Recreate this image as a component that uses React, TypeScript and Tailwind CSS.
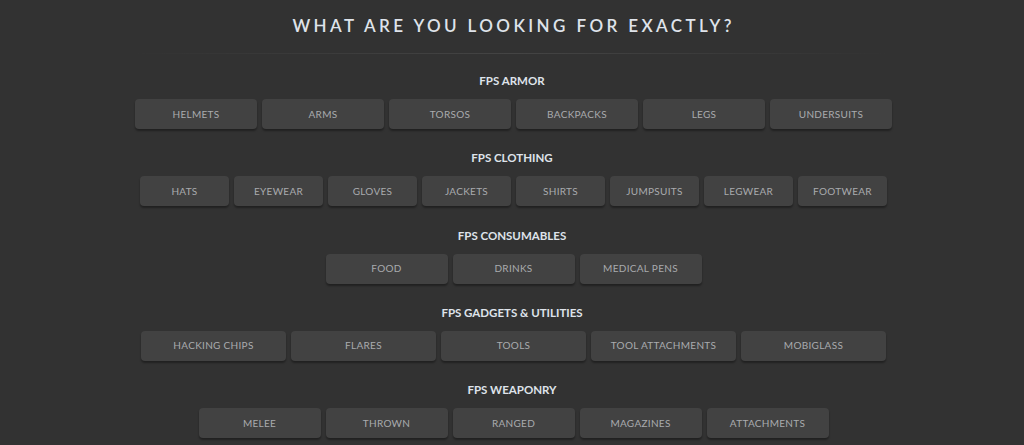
import React from "react";

interface Section {
  title: string;
  width: string;
  items: string[];
}

const sections: Section[] = [
  { title: "FPS ARMOR", width: "w-[122px]", items: ["HELMETS", "ARMS", "TORSOS", "BACKPACKS", "LEGS", "UNDERSUITS"] },
  { title: "FPS CLOTHING", width: "w-[89px]", items: ["HATS", "EYEWEAR", "GLOVES", "JACKETS", "SHIRTS", "JUMPSUITS", "LEGWEAR", "FOOTWEAR"] },
  { title: "FPS CONSUMABLES", width: "w-[122px]", items: ["FOOD", "DRINKS", "MEDICAL PENS"] },
  { title: "FPS GADGETS & UTILITIES", width: "w-[145px]", items: ["HACKING CHIPS", "FLARES", "TOOLS", "TOOL ATTACHMENTS", "MOBIGLASS"] },
  { title: "FPS WEAPONRY", width: "w-[122px]", items: ["MELEE", "THROWN", "RANGED", "MAGAZINES", "ATTACHMENTS"] },
];

export default function App() {
  return (
    <div className="min-h-screen w-full bg-[#323232] font-['Lato','Open_Sans',sans-serif] overflow-hidden">
      {/* heading */}
      <div className="pt-[14px] text-center">
        <h1 className="text-[17px] leading-[24px] font-semibold tracking-[0.2em] text-[#dfe3ea] pl-[0.2em]">
          WHAT ARE YOU LOOKING FOR EXACTLY?
        </h1>
      </div>
      <div className="mx-auto mt-[15px] h-px w-[760px] bg-gradient-to-r from-transparent via-[#444444] to-transparent" />

      <div className="flex flex-col gap-[21.3px] pt-[19px]">
        {sections.map((s) => (
          <div key={s.title} className="flex flex-col items-center">
            <h2 className="text-[11.5px] leading-[16px] font-bold text-[#dfe3ea]">{s.title}</h2>
            <div className="mt-[10px] flex justify-center gap-[5px] pl-[3px]">
              {s.items.map((item) => (
                <button
                  key={item}
                  className={`${s.width} h-[30px] rounded-[4px] bg-[#424242] text-[10px] tracking-[0.03em] text-[#a9abae] shadow-[0_2px_2px_rgba(0,0,0,0.35)]`}
                >
                  {item}
                </button>
              ))}
            </div>
          </div>
        ))}
      </div>
    </div>
  );
}
